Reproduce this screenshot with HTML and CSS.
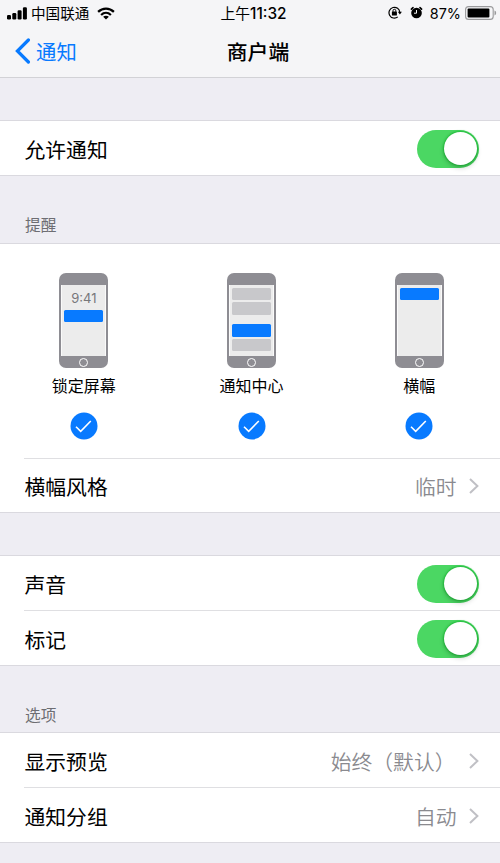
FILE: index.html
```html
<!DOCTYPE html>
<html lang="zh-CN">
<head>
<meta charset="utf-8">
<title>通知</title>
<link rel="stylesheet" href="styles.css">
</head>
<body>
<header class="top">
  <div class="status">
    <div class="carrier">
      <svg width="20" height="13" viewBox="0 0 20 13"><rect x="0" y="8" width="4" height="4.5" rx="1.2"/><rect x="5.3" y="6" width="4" height="6.5" rx="1.2"/><rect x="10.6" y="3.3" width="4" height="9.2" rx="1.2"/><rect x="15.9" y="0.3" width="4" height="12.2" rx="1.2"/></svg>
      <span class="carrier-name">中国联通</span>
      <svg width="18" height="13" viewBox="0 0 18 13"><g fill="none" stroke="#000" stroke-width="2.2"><path d="M1.1 4.9C5.6.4 12.4.4 16.9 4.9"/><path d="M4.1 8C7 5.2 11 5.2 13.9 8"/></g><path d="M9 12.6 6.1 9.8C7.7 8.5 10.3 8.5 11.9 9.8Z"/></svg>
    </div>
    <div class="clock">上午<span class="num">11:32</span></div>
    <div class="indicators">
      <svg width="14" height="13" viewBox="0 0 14 13"><path d="M9.8 10.9A5.4 5.4 0 1 1 11.8 6.4" fill="none" stroke="#000" stroke-width="1.2"/><path d="M9.8 5.7h4.1l-2 2.7z"/><rect x="3.9" y="5.6" width="5" height="4" rx=".5"/><path d="M5 5.8V4.7a1.4 1.4 0 0 1 2.8 0v1.1" fill="none" stroke="#000"/></svg>
      <svg class="alarm" width="13" height="13" viewBox="0 0 13 13"><circle cx="6.5" cy="7" r="5.3"/><path d="M1.4 3.1 3 1.6M11.6 3.1 10 1.6" stroke="#000" stroke-width="1.6" stroke-linecap="round"/><path d="M6.5 4v3.2H4" fill="none" stroke="#f5f5f7"/></svg>
      <span class="percent">87%</span>
      <svg class="battery" width="32" height="14" viewBox="0 0 32 14"><rect x=".6" y=".6" width="27.6" height="12.8" rx="3" fill="none" stroke="#9a9a9c" stroke-width="1.1"/><rect x="2.6" y="2.5" width="21.8" height="9" rx="1"/><path d="M29.5 4.6q1.7.5 1.7 2.4t-1.7 2.4z" fill="#9a9a9c"/></svg>
    </div>
  </div>
  <nav class="navbar">
    <div class="back">
      <svg width="16" height="26" viewBox="0 0 16 26"><path d="M13.4 2 2.4 13l11 11" fill="none" stroke="#087aff" stroke-width="3.2" stroke-linecap="round"/></svg>
      <span>通知</span>
    </div>
    <h1 class="title">商户端</h1>
  </nav>
</header>
<main>
  <section class="group allow">
    <div class="row"><span>允许通知</span><i class="toggle"></i></div>
  </section>
  <h2 class="caption">提醒</h2>
  <section class="group alerts">
    <div class="styles">
      <div class="style">
        <div class="phone"><div class="screen lock"><span class="time">9:41</span><b class="note on"></b></div><i class="home"></i></div>
        <span class="label">锁定屏幕</span>
        <svg class="check" width="28" height="28" viewBox="0 0 28 28"><circle cx="14" cy="14" r="13.5" fill="#087aff"/><path d="M6 14.7l4.7 4.6L20.8 9" fill="none" stroke="#fff" stroke-width="1.6"/></svg>
      </div>
      <div class="style">
        <div class="phone"><div class="screen"><b class="note"></b><b class="note"></b><b class="note on gap"></b><b class="note"></b></div><i class="home"></i></div>
        <span class="label">通知中心</span>
        <svg class="check" width="28" height="28" viewBox="0 0 28 28"><circle cx="14" cy="14" r="13.5" fill="#087aff"/><path d="M6 14.7l4.7 4.6L20.8 9" fill="none" stroke="#fff" stroke-width="1.6"/></svg>
      </div>
      <div class="style">
        <div class="phone"><div class="screen"><b class="note on"></b></div><i class="home"></i></div>
        <span class="label">横幅</span>
        <svg class="check" width="28" height="28" viewBox="0 0 28 28"><circle cx="14" cy="14" r="13.5" fill="#087aff"/><path d="M6 14.7l4.7 4.6L20.8 9" fill="none" stroke="#fff" stroke-width="1.6"/></svg>
      </div>
    </div>
    <div class="row split"><span>横幅风格</span><span class="value">临时</span><svg class="chevron" width="10" height="16" viewBox="0 0 10 16"><path d="M1 1l7.4 7L1 15" fill="none" stroke="#c0c0c5" stroke-width="2"/></svg></div>
  </section>
  <section class="group sounds">
    <div class="row"><span>声音</span><i class="toggle"></i></div>
    <div class="row split"><span>标记</span><i class="toggle"></i></div>
  </section>
  <h2 class="caption options">选项</h2>
  <section class="group">
    <div class="row"><span>显示预览</span><span class="value wide">始终（默认）</span><svg class="chevron" width="10" height="16" viewBox="0 0 10 16"><path d="M1 1l7.4 7L1 15" fill="none" stroke="#c0c0c5" stroke-width="2"/></svg></div>
    <div class="row split"><span>通知分组</span><span class="value">自动</span><svg class="chevron" width="10" height="16" viewBox="0 0 10 16"><path d="M1 1l7.4 7L1 15" fill="none" stroke="#c0c0c5" stroke-width="2"/></svg></div>
  </section>
</main>
</body>
</html>
```
FILE: styles.css
```css
* { box-sizing: border-box; }
html { overflow: hidden; }
body {
  margin: 0;
  height: 863px;
  background: #eeedf3;
  color: #000;
  font-family: "Noto Sans CJK SC", sans-serif;
  font-size: 20.8px;
}
svg { display: block; flex: none; }

.top { height: 78px; background: #f5f5f7; border-bottom: 1px solid #d2d2d6; }
.status {
  display: grid;
  grid-template-columns: 1fr auto 1fr;
  align-items: center;
  height: 25px;
  padding: 0 3px 0 7px;
  font-size: 14.6px;
  line-height: 25px;
}
.carrier { display: flex; align-items: center; }
.carrier-name { margin: -1px 8px 0 4px; }
.clock { margin: 0 0 0 3px; font-size: 14.8px; }
.num { font-family: Inter, sans-serif; font-weight: 500; font-size: 15.4px; }
.indicators { display: flex; align-items: center; justify-content: flex-end; }
.indicators svg { margin-top: -1px; }
.indicators .alarm { margin-left: 8px; }
.percent { margin: 0 4px 0 7px; font-family: Inter, sans-serif; font-size: 14.4px; }

.navbar {
  display: grid;
  grid-template-columns: 1fr auto 1fr;
  align-items: center;
  height: 52px;
  padding: 0 0 0 15px;
}
.back { display: flex; align-items: center; gap: 5px; color: #087aff; font-size: 20.4px; }
.back span { margin-top: -1px; }
.title { margin: 0 0 0 -7px; font-size: 20.8px; font-weight: 500; grid-column: 2; transform: translateX(4px); }

.group { background: #fff; border-top: 1px solid #dad9df; border-bottom: 1px solid #dad9df; }
.allow { margin-top: 42px; }
.sounds { margin-top: 42px; }
.caption {
  height: 67px;
  margin: 0;
  padding: 37px 25px 0;
  color: #6d6d72;
  font-size: 15.7px;
  font-weight: 400;
  line-height: 24px;
}
.options { height: 66px; }
.row { display: flex; align-items: center; height: 54px; padding: 1px 21px 0 24.5px; }
.split { position: relative; height: 55px; padding-top: 2px; }
.alerts .split { height: 54px; }
.split::before {
  content: "";
  position: absolute;
  top: 0;
  left: 24px;
  right: 0;
  height: 1px;
  background: #dfdfe2;
}
.value { margin-left: auto; color: #8a8a8f; font-weight: 350; }
.wide { margin-right: 1.5px; }
.wide + .chevron { margin-left: 12px; }
.chevron { margin-left: 12.5px; }

.toggle {
  width: 62px;
  height: 38px;
  margin-left: auto;
  padding: 2px;
  border-radius: 19px;
  background: #4bd763;
}
.toggle::before {
  content: "";
  display: block;
  width: 33.5px;
  height: 33.5px;
  margin-left: 24.5px;
  border-radius: 50%;
  background: #fff;
  box-shadow: 0 3px 5px rgba(0, 0, 0, .18), 0 0 2px 1px rgba(0, 170, 30, .55);
}

.styles {
  display: grid;
  grid-template-columns: repeat(3, 167.7px);
  height: 214px;
  padding-top: 29px;
}
.style { display: flex; flex-direction: column; align-items: center; }
.phone {
  display: flex;
  flex-direction: column;
  align-items: center;
  width: 49px;
  height: 95px;
  padding-top: 12px;
  border-radius: 7px;
  background: #8e8d93;
}
.screen {
  display: flex;
  flex-direction: column;
  align-items: center;
  gap: 2px;
  width: 45px;
  height: 71px;
  padding-top: 2.5px;
  background: #ececec;
  border: 1px solid #fafafa;
  border-width: 0 1px;
}
.time { height: 20px; color: #77777b; font: 13px/20px Inter, sans-serif; }
.note { width: 39px; height: 12.5px; border-radius: 1.5px; background: #c8c8cb; flex: none; }
.on { background: #087aff; }
.gap { margin-top: 7.5px; }
.home { width: 9px; height: 9px; margin-top: 1.5px; border: 1.3px solid #fff; border-radius: 50%; }
.label { margin-top: 5px; font-size: 16px; line-height: 24px; }
.check { margin-top: 14.5px; }
```
